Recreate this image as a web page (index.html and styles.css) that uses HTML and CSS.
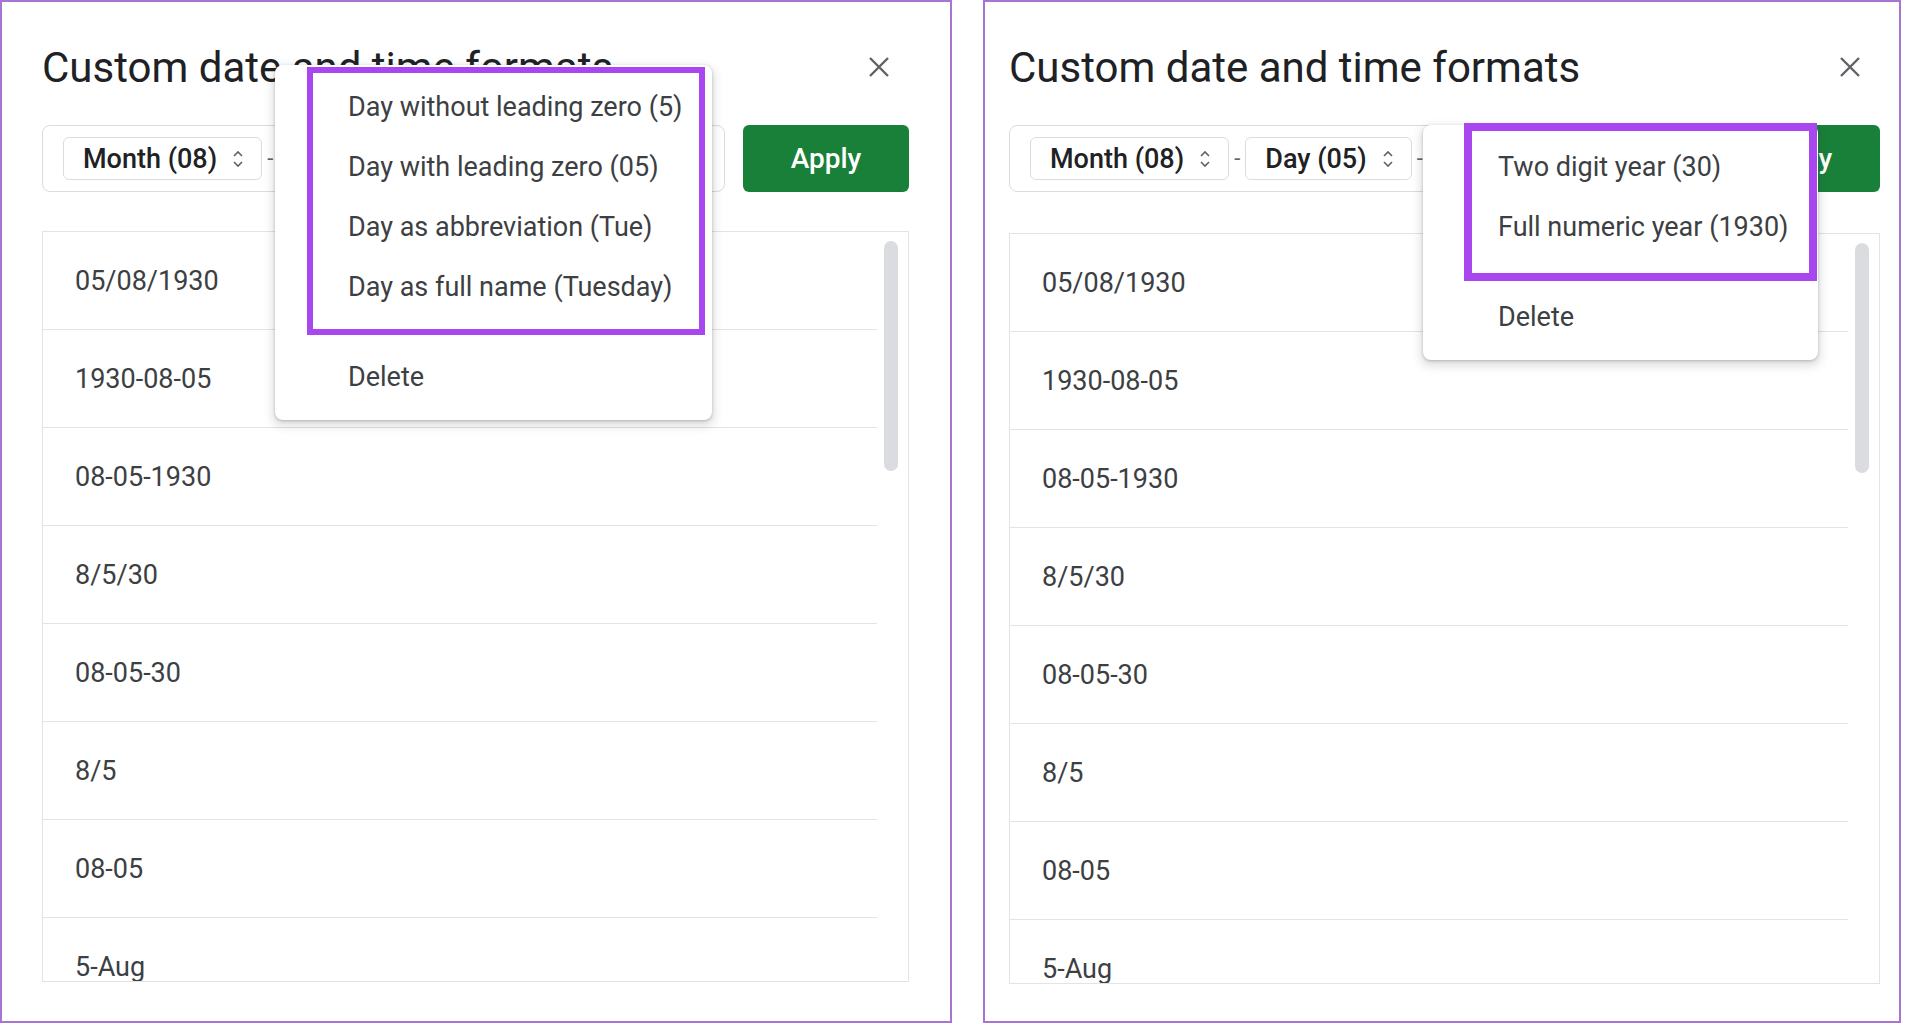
FILE: index.html
```html
<!DOCTYPE html>
<html>
  <head>
    <meta charset="UTF-8" />
    <title>Custom date and time formats</title>
    <link rel="stylesheet" href="styles.css">
  </head>

  <body>
    <div class="shots">
      <!-- 左：日期下拉 -->
      <section class="shot shot-left">
        <div class="dialog">
          <header class="dialog-head">
            <h1 class="dialog-title">Custom date and time formats</h1>
            <button class="close" type="button">
              <svg width="22" height="22" viewBox="0 0 22 22"><path d="M2 2L20 20M20 2L2 20" /></svg>
            </button>
          </header>
          <div class="format-row">
            <div class="format-bar">
              <span class="chip">Month (08)<svg class="updown" width="12" height="20" viewBox="0 0 12 20"><path d="M2 7L6 3L10 7M2 13L6 17L10 13" /></svg></span>
              <span class="sep">-</span>
            </div>
            <button class="apply" type="button">Apply</button>
          </div>
          <div class="list">
            <ul class="rows">
              <li>05/08/1930</li>
              <li>1930-08-05</li>
              <li>08-05-1930</li>
              <li>8/5/30</li>
              <li>08-05-30</li>
              <li>8/5</li>
              <li>08-05</li>
              <li>5-Aug</li>
            </ul>
            <div class="track"><div class="thumb"></div></div>
          </div>

          <div class="menu menu-day">
            <ul class="menu-items">
              <li>Day without leading zero (5)</li>
              <li>Day with leading zero (05)</li>
              <li>Day as abbreviation (Tue)</li>
              <li>Day as full name (Tuesday)</li>
            </ul>
            <div class="menu-delete">Delete</div>
            <div class="mark mark-day"></div>
          </div>
        </div>
      </section>

      <!-- 右：年份下拉 -->
      <section class="shot shot-right">
        <div class="dialog">
          <header class="dialog-head">
            <h1 class="dialog-title">Custom date and time formats</h1>
            <button class="close" type="button">
              <svg width="22" height="22" viewBox="0 0 22 22"><path d="M2 2L20 20M20 2L2 20" /></svg>
            </button>
          </header>
          <div class="format-row">
            <div class="format-bar">
              <span class="chip">Month (08)<svg class="updown" width="12" height="20" viewBox="0 0 12 20"><path d="M2 7L6 3L10 7M2 13L6 17L10 13" /></svg></span>
              <span class="sep">-</span>
              <span class="chip">Day (05)<svg class="updown" width="12" height="20" viewBox="0 0 12 20"><path d="M2 7L6 3L10 7M2 13L6 17L10 13" /></svg></span>
              <span class="sep">-</span>
            </div>
            <button class="apply" type="button">Apply</button>
          </div>
          <div class="list list-low">
            <ul class="rows">
              <li>05/08/1930</li>
              <li>1930-08-05</li>
              <li>08-05-1930</li>
              <li>8/5/30</li>
              <li>08-05-30</li>
              <li>8/5</li>
              <li>08-05</li>
              <li>5-Aug</li>
            </ul>
            <div class="track"><div class="thumb"></div></div>
          </div>

          <div class="menu menu-year">
            <ul class="menu-items">
              <li>Two digit year (30)</li>
              <li>Full numeric year (1930)</li>
            </ul>
            <div class="menu-delete">Delete</div>
            <div class="mark mark-year"></div>
          </div>
        </div>
      </section>
    </div>
  </body>
</html>
```

FILE: styles.css
```css
body {
  margin: 0;
  background: white;
  font-family: Roboto, "Liberation Sans", sans-serif;
  color: #3c4043;
}

.shots {
  display: flex;
  gap: 31px;
}

.shot {
  box-sizing: border-box;
  height: 1023px;
  border: 2px solid #a874d4;
}

.shot-left {
  width: 952px;
  padding-left: 40px;
}

.shot-right {
  width: 918px;
  padding-left: 24px;
}

.shot-left .dialog {
  width: 867px;
}

.shot-right .dialog {
  width: 871px;
}

.dialog {
  position: relative;
  padding-top: 25px;
}

.dialog-head {
  display: flex;
  align-items: center;
  justify-content: space-between;
  height: 80px;
}

.dialog-title {
  margin: 0;
  font-size: 42px;
  font-weight: 400;
  color: #202124;
  white-space: nowrap;
}

.close {
  width: 44px;
  height: 44px;
  margin-right: 8px;
  padding: 0;
  border: none;
  background: none;
  display: flex;
  align-items: center;
  justify-content: center;
}

.close path {
  stroke: #5f6368;
  stroke-width: 2.4;
  fill: none;
}

.format-row {
  display: flex;
  gap: 18px;
  height: 67px;
  margin-top: 18px;
}

.format-bar {
  flex: 1;
  display: flex;
  align-items: center;
  gap: 5px;
  padding-left: 20px;
  border: 1px solid #dadce0;
  border-radius: 8px;
  overflow: hidden;
}

.chip {
  display: flex;
  align-items: center;
  gap: 15px;
  height: 43px;
  box-sizing: border-box;
  padding: 0 17px 0 19px;
  border: 1px solid #dadce0;
  border-radius: 6px;
  font-size: 27px;
  font-weight: 500;
  color: #202124;
  white-space: nowrap;
}

.updown path {
  stroke: #5f6368;
  stroke-width: 1.6;
  fill: none;
}

.sep {
  font-size: 22px;
  color: #5f6368;
}

.apply {
  width: 166px;
  border: none;
  border-radius: 6px;
  background: #188038;
  color: white;
  font-family: Roboto, "Liberation Sans", sans-serif;
  font-size: 28px;
  font-weight: 500;
}

.list {
  display: flex;
  height: 751px;
  margin-top: 39px;
  box-sizing: border-box;
  border: 1px solid #e3e3e3;
  overflow: hidden;
}

.list-low {
  margin-top: 41px;
}

.rows {
  flex: 1;
  margin: 0;
  padding: 0;
  list-style: none;
}

.rows li {
  height: 98px;
  box-sizing: border-box;
  padding-left: 32px;
  border-bottom: 1px solid #e3e3e3;
  display: flex;
  align-items: center;
  font-size: 27px;
  color: #3c4043;
}

.track {
  width: 31px;
  flex-shrink: 0;
}

.thumb {
  width: 14px;
  height: 230px;
  margin: 9px 0 0 7px;
  border-radius: 7px;
  background: #dadce0;
}

/* 下拉菜单 */
.menu {
  position: absolute;
  background: white;
  border-radius: 8px;
  box-shadow: 0 1px 3px rgba(60, 64, 67, 0.3), 0 4px 8px 3px rgba(60, 64, 67, 0.15);
  padding: 12px 0 13px;
}

.menu-day {
  left: 233px;
  top: 63px;
  width: 437px;
}

.menu-year {
  left: 414px;
  top: 123px;
  width: 395px;
}

.menu-items {
  margin: 0;
  padding: 0;
  list-style: none;
}

.menu-items li,
.menu-delete {
  height: 60px;
  line-height: 60px;
  padding-left: 73px;
  font-size: 27px;
  color: #3c4043;
  white-space: nowrap;
}

.menu-year .menu-items li,
.menu-year .menu-delete {
  padding-left: 75px;
}

.menu-delete {
  margin-top: 30px;
}

.mark {
  position: absolute;
  box-sizing: border-box;
  border: 6px solid #a846ef;
}

.mark-day {
  left: 32px;
  top: 2px;
  width: 398px;
  height: 268px;
}

.mark-year {
  left: 41px;
  top: -2px;
  width: 353px;
  height: 158px;
  border-width: 8px;
}
```
